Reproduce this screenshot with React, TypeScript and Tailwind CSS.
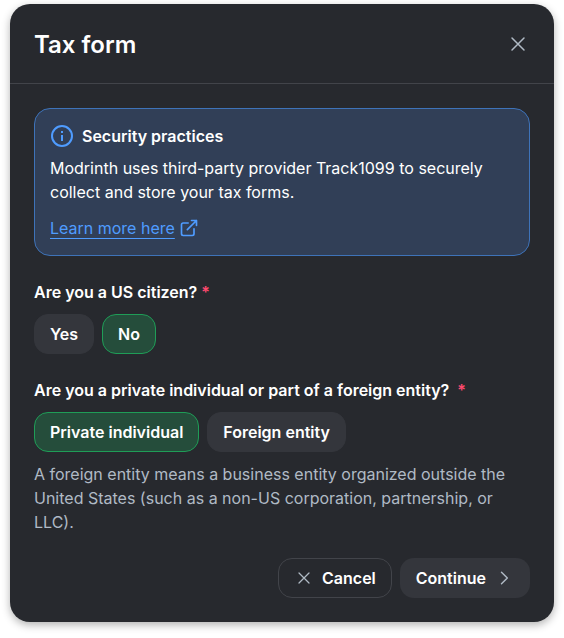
import { useState } from "react";
import type { ReactNode } from "react";

function CloseIcon({ className }: { className: string }) {
  return (
    <svg className={className} viewBox="0 0 24 24" fill="none" stroke="currentColor" strokeWidth="1.5" strokeLinecap="round" aria-hidden="true">
      <path d="M6 18 18 6M6 6l12 12" />
    </svg>
  );
}

function ChevronIcon({ className }: { className: string }) {
  return (
    <svg className={className} viewBox="0 0 24 24" fill="none" stroke="currentColor" strokeWidth="1.75" strokeLinecap="round" strokeLinejoin="round" aria-hidden="true">
      <path d="m9 5 7 7-7 7" />
    </svg>
  );
}

function InfoIcon() {
  return (
    <svg className="size-6 shrink-0 text-[#4f9cff]" viewBox="0 0 24 24" fill="none" stroke="currentColor" strokeWidth="2" aria-hidden="true">
      <circle cx="12" cy="12" r="10" />
      <path d="M12 17v-6M12 9V7" />
    </svg>
  );
}

function ExternalIcon() {
  return (
    <svg className="size-5 shrink-0" viewBox="0 0 24 24" fill="none" stroke="currentColor" strokeWidth="2" strokeLinecap="round" strokeLinejoin="round" aria-hidden="true">
      <path d="M18 13v6a2 2 0 0 1-2 2H5a2 2 0 0 1-2-2V8a2 2 0 0 1 2-2h6M15 3h6v6M10 14 21 3" />
    </svg>
  );
}

function Choice({ selected, onClick, children }: { selected: boolean; onClick: () => void; children: ReactNode }) {
  const tone = selected ? "border-[#1f9d57] bg-[#254d3b]" : "border-[#34363c] bg-[#34363c]";
  return (
    <button type="button" aria-pressed={selected} onClick={onClick} className={`h-10 rounded-[14px] border px-[15px] font-semibold text-white ${tone}`}>
      {children}
    </button>
  );
}

export default function App() {
  const [citizen, setCitizen] = useState(false);
  const [entity, setEntity] = useState("individual");

  return (
    <main className="bg-white px-[10px] pt-1 pb-4 font-['Inter',sans-serif] text-base leading-6">
      <section role="dialog" aria-labelledby="title" className="rounded-[20px] bg-[#27292e] text-white shadow-[0_3px_8px_rgba(0,0,0,0.3)]">
        <header className="flex items-start justify-between border-b border-[#42444a] px-6 pt-6 pb-[21px]">
          <h1 id="title" className="text-2xl leading-[34px] font-semibold">Tax form</h1>
          <button type="button" aria-label="Close" className="py-1 text-[#b0bac5]">
            <CloseIcon className="size-6" />
          </button>
        </header>

        <div className="flex flex-col gap-6 p-6">
          <div className="rounded-2xl border border-[#3e73b9] bg-[#313f57] p-[15px]">
            <h2 className="flex items-center gap-2 font-semibold">
              <InfoIcon />
              Security practices
            </h2>
            <p className="mt-2">Modrinth uses third-party provider Track1099 to securely collect and store your tax forms.</p>
            <a href="#learn-more" className="mt-3 inline-flex items-center gap-1 align-top text-[#4f9cff]">
              <span className="underline underline-offset-4">Learn more here</span>
              <ExternalIcon />
            </a>
          </div>

          <div role="group" aria-labelledby="citizen-label" className="flex flex-col gap-[10px]">
            <div id="citizen-label" className="font-semibold">
              Are you a US citizen? <span className="text-[#ff496e]">*</span>
            </div>
            <div className="flex flex-wrap gap-2">
              <Choice selected={citizen} onClick={() => setCitizen(true)}>Yes</Choice>
              <Choice selected={!citizen} onClick={() => setCitizen(false)}>No</Choice>
            </div>
          </div>

          <div role="group" aria-labelledby="entity-label" className="flex flex-col gap-[10px]">
            <div id="entity-label" className="flex gap-2 font-semibold">
              Are you a private individual or part of a foreign entity?
              <span className="text-[#ff496e]">*</span>
            </div>
            <div className="flex flex-wrap gap-2">
              <Choice selected={entity === "individual"} onClick={() => setEntity("individual")}>Private individual</Choice>
              <Choice selected={entity === "foreign"} onClick={() => setEntity("foreign")}>Foreign entity</Choice>
            </div>
            <p className="text-[#b0bac5]">
              A foreign entity means a business entity organized outside the United States (such as a non-US corporation, partnership, or LLC).
            </p>
          </div>

          <footer className="flex justify-end gap-2">
            <button type="button" className="flex h-10 items-center gap-2 rounded-[14px] border border-[#42444a] px-[15px] font-semibold">
              <CloseIcon className="size-5 text-[#b0bac5]" />
              Cancel
            </button>
            <button type="button" className="flex h-10 items-center gap-2 rounded-[14px] bg-[#34363c] px-4 font-semibold">
              Continue
              <ChevronIcon className="size-5 text-[#b0bac5]" />
            </button>
          </footer>
        </div>
      </section>
    </main>
  );
}
